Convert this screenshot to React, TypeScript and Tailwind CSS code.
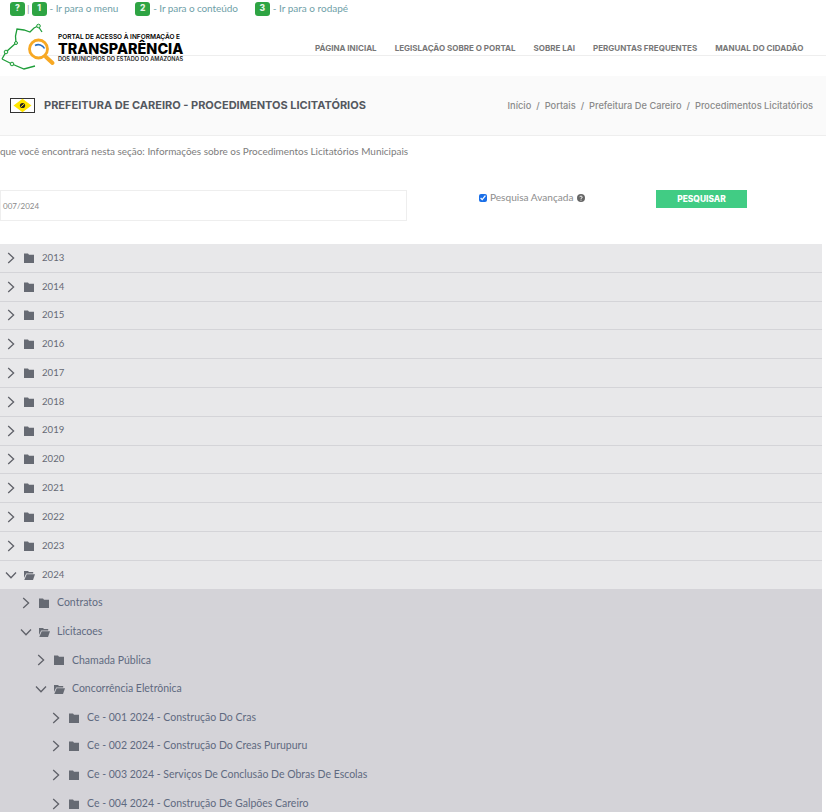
import React from "react";

const RW = "font-['Lato','Noto_Sans',sans-serif]";
const PP = "font-['Inter','Open_Sans',sans-serif]";

function Chevron({ open }: { open?: boolean }) {
  return (
    <svg width="12" height="12" viewBox="0 0 12 12" fill="none" stroke="#5f6169" strokeWidth="1.3" className="shrink-0">
      {open ? <path d="M1 3.5 L6 8.8 L11 3.5" /> : <path d="M3.2 1 L8.6 6 L3.2 11" />}
    </svg>
  );
}

function Folder({ open }: { open?: boolean }) {
  return open ? (
    <svg width="11" height="10" viewBox="0 0 11 10" className="block shrink-0" fill="#666a73">
      <path d="M0 1 H4 L5 2 H9.2 V3.4 H2.2 L0 8 Z" />
      <path d="M2.7 4.2 H11 L9 10 H0.3 Z" />
    </svg>
  ) : (
    <svg width="10" height="10" viewBox="0 0 10 10" className="block shrink-0" fill="#666a73">
      <path d="M0 0.5 H4 L5 1.8 H10 V10 H0 Z" />
    </svg>
  );
}

type Row = { label: string; level: number; open?: boolean; border?: boolean };

const years: Row[] = ["2013", "2014", "2015", "2016", "2017", "2018", "2019", "2020", "2021", "2022", "2023"].map(
  (y) => ({ label: y, level: 0, border: true })
);

const nested: Row[] = [
  { label: "Contratos", level: 1, border: true },
  { label: "Licitacoes", level: 1, open: true },
  { label: "Chamada Pública", level: 2 },
  { label: "Concorrência Eletrônica", level: 2, open: true },
  { label: "Ce - 001 2024 - Construção Do Cras", level: 3 },
  { label: "Ce - 002 2024 - Construção Do Creas Purupuru", level: 3 },
  { label: "Ce - 003 2024 - Serviços De Conclusão De Obras De Escolas", level: 3 },
  { label: "Ce - 004 2024 - Construção De Galpões Careiro", level: 3 },
];

const pad = ["pl-[5px]", "pl-[20px]", "pl-[35px]", "pl-[50px]"];

function TreeRow({ r }: { r: Row }) {
  return (
    <div
      className={`flex shrink-0 items-center ${pad[r.level]} ${
        r.border ? "h-[28.8px] border-b border-[#d4d4d8]" : r.level === 0 ? "h-[28px]" : "h-[28.62px]"
      }`}
    >
      <Chevron open={r.open} />
      <span className="ml-[7px] w-[10px] shrink-0">
        <Folder open={r.open} />
      </span>
      <span className={`ml-[8px] ${r.level === 0 ? "text-[9.6px] text-[#666a75]" : "text-[10.5px] text-[#5f6a80]"}`}>{r.label}</span>
    </div>
  );
}

function Key({ n }: { n: string }) {
  return (
    <span className={`${PP} flex h-[14px] w-[15px] shrink-0 items-center justify-center rounded-[3px] bg-[#2ea443] text-[8.5px] font-extrabold text-[#e6f5e6]`}>
      {n}
    </span>
  );
}

function Logo() {
  return (
    <div className="relative z-10 mt-[5px] flex h-[50px] w-[190px] shrink-0 items-start">
      <svg width="56" height="50" viewBox="0 22 56 50" className="shrink-0">
        <path
          d="M2 59 L6 52 L16 43 L15.5 36 L17 29 L24 30 L30 32 L34 28 L38 26 L42 32 M2 59 L12 64 L24 69 L35 66"
          fill="none"
          stroke="#1f9e3a"
          strokeWidth="1.3"
        />
        <g fill="#e6f5e6" stroke="#1f9e3a" strokeWidth="1">
          <circle cx="38.5" cy="26" r="1.8" />
          <circle cx="16" cy="43" r="1.5" />
          <circle cx="6" cy="52" r="1.8" />
          <circle cx="12" cy="64" r="1.8" />
        </g>
        <circle cx="38.5" cy="49" r="9" fill="#fff" stroke="#f7a823" strokeWidth="2.8" />
        <path d="M35 45.5 A 7 7 0 0 1 44.5 48.5" fill="none" stroke="#2a6fc0" strokeWidth="1.6" />
        <path d="M46 57 L52.5 63" stroke="#f7a823" strokeWidth="4" strokeLinecap="round" />
      </svg>
      <div className={`${PP} ml-[2px] flex flex-col pt-[11px] text-black`}>
        <span className="text-[6.5px] leading-[9px] font-semibold whitespace-nowrap">PORTAL DE ACESSO À INFORMAÇÃO E</span>
        <span className="text-[14.4px] leading-[13px] font-extrabold whitespace-nowrap">TRANSPARÊNCIA</span>
        <span className="text-[5.6px] leading-[9px] font-semibold whitespace-nowrap text-[#222]">DOS MUNICÍPIOS DO ESTADO DO AMAZONAS</span>
      </div>
    </div>
  );
}

function Flag() {
  return (
    <svg width="25" height="15" viewBox="0 0 25 15" className="shrink-0">
      <rect x="0.5" y="0.5" width="24" height="14" fill="#fff" stroke="#333" />
      <path d="M12.5 0.8 L21.5 7.5 L12.5 14.2 L3.5 7.5 Z" fill="#ffe600" />
      <circle cx="12.5" cy="7.5" r="2.6" fill="#222" />
      <path d="M10.8 9 L14.2 6" stroke="#ffe600" strokeWidth="1" />
    </svg>
  );
}

export default function App() {
  return (
    <div className={`${RW} h-[812px] w-[826px] overflow-hidden bg-white`}>
      <div className="flex h-[17px] items-center pl-[10px] text-[10px]">
        <Key n="?" />
        <span className="mx-[2px] text-[#999]">|</span>
        <Key n="1" />
        <span className="ml-[3px] tracking-[-0.05px] text-[#6f9fa8]">- Ir para o menu</span>
        <span className="ml-[17px]"><Key n="2" /></span>
        <span className="ml-[3px] tracking-[-0.1px] text-[#6f9fa8]">- Ir para o conteúdo</span>
        <span className="ml-[17px]"><Key n="3" /></span>
        <span className="ml-[3px] text-[#6f9fa8]">- Ir para o rodapé</span>
      </div>

      <div className="flex h-[39px] items-start border-b border-[#eeeeee]">
        <Logo />
        <nav className={`${PP} ml-[125px] flex gap-[18px] self-end pb-[2px] text-[8px] leading-[10px] font-bold whitespace-nowrap text-[#777]`}>
          <span>PÁGINA INICIAL</span>
          <span>LEGISLAÇÃO SOBRE O PORTAL</span>
          <span>SOBRE LAI</span>
          <span>PERGUNTAS FREQUENTES</span>
          <span>MANUAL DO CIDADÃO</span>
        </nav>
      </div>

      <div className="mt-[20px] flex h-[60px] items-center border-b border-[#eeeeee] bg-[#fafafa] pr-[13px] pl-[10px]">
        <Flag />
        <h1 className={`${PP} ml-[9px] text-[11px] font-bold whitespace-nowrap text-[#54585f]`}>
          PREFEITURA DE CAREIRO - PROCEDIMENTOS LICITATÓRIOS
        </h1>
        <div className={`${PP} ml-auto flex gap-[5px] text-[9.25px] font-medium whitespace-nowrap text-[#8a8a8a]`}>
          <span>Início</span><span>/</span>
          <span>Portais</span><span>/</span>
          <span>Prefeitura De Careiro</span><span>/</span>
          <span>Procedimentos Licitatórios</span>
        </div>
      </div>

      <p className="pt-[8px] text-[9.95px] leading-[14px] whitespace-nowrap text-[#7d7d7d]">
        que você encontrará nesta seção: Informações sobre os Procedimentos Licitatórios Municipais
      </p>

      <div className="mt-[32px] flex h-[54px] items-start">
        <div className="flex h-[31px] w-[407px] shrink-0 items-center border border-[#eeeeee] pl-[2px] text-[8px] text-[#8a8a8a]">
          007/2024
        </div>
        <label className="ml-[72px] flex w-[177px] shrink-0 items-center text-[10.1px] whitespace-nowrap text-[#8d8d8d]">
          <input type="checkbox" defaultChecked className="m-0 h-[8px] w-[8px] accent-[#1a6fe8]" />
          <span className="ml-[3px]">Pesquisa Avançada</span>
          <svg width="8" height="8" viewBox="0 0 8 8" className="ml-[3px]">
            <circle cx="4" cy="4" r="4" fill="#666" />
            <path d="M2.8 3.1 A1.2 1.1 0 1 1 4 4.3 V4.9" fill="none" stroke="#fff" strokeWidth="0.9" />
            <circle cx="4" cy="6.1" r="0.55" fill="#fff" />
          </svg>
        </label>
        <button className={`${PP} h-[18px] w-[91px] shrink-0 bg-[#41cc84] text-[8.4px] font-extrabold text-white`}>
          PESQUISAR
        </button>
      </div>

      <div className="w-[822px]">
        <div className="bg-[#e8e8ea]">
          {years.map((r) => (
            <TreeRow key={r.label} r={r} />
          ))}
          <TreeRow r={{ label: "2024", level: 0, open: true }} />
        </div>
        <div className="bg-[#d4d3d8]">
          {nested.map((r) => (
            <TreeRow key={r.label} r={r} />
          ))}
        </div>
      </div>
    </div>
  );
}
